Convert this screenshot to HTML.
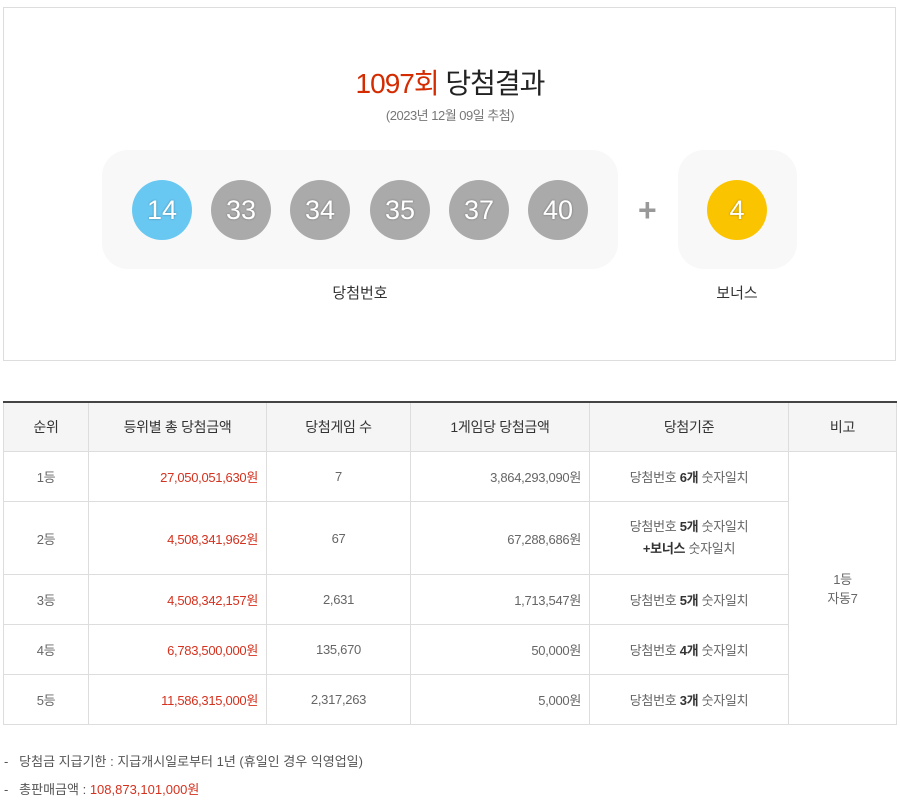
<!DOCTYPE html>
<html><head><meta charset="utf-8"><style>
body{margin:0;width:900px;height:800px;background:#fff;font-family:"Liberation Sans","Noto Sans CJK KR",sans-serif;color:#333;position:relative;overflow:hidden}
.box{position:absolute;left:3px;top:7px;width:891px;height:352px;border:1px solid #ddd}
.title{position:absolute;top:62px;left:0;width:100%;text-align:center;font-size:28px;color:#222;letter-spacing:-1px}
.title b{color:#d42b00;font-weight:normal}
.date{position:absolute;top:105px;width:100%;text-align:center;font-size:13px;color:#777;letter-spacing:-0.5px}
.panel{position:absolute;background:#f8f8f8;border-radius:26px}
.ball{position:absolute;width:60px;height:60px;border-radius:50%;background:#aaa;color:#fff;font-size:27px;line-height:60px;text-align:center;top:180px;text-shadow:0 0 2px rgba(0,0,0,.35)}
.lbl{position:absolute;top:282px;font-size:15px;color:#333;text-align:center}
table{position:absolute;left:3px;top:401px;width:894px;border-collapse:collapse;border-top:2px solid #444;font-size:13px;color:#666}
td,th{border:1px solid #ddd;padding:0 8px;letter-spacing:-0.3px}
th{background:#f5f5f5;font-weight:normal;color:#333;height:48px;font-size:14px}
td{height:49px;text-align:center}
td.r{text-align:right}
.red{color:#d4321f}
td b{color:#333}
.note{position:absolute;left:4px;font-size:13px;color:#555}
</style></head><body>
<div class="box"></div>
<div class="title"><b>1097회</b> 당첨결과</div>
<div class="date">(2023년 12월 09일 추첨)</div>
<div class="panel" style="left:102px;top:150px;width:516px;height:119px"></div>
<div class="panel" style="left:678px;top:150px;width:119px;height:119px"></div>
<div class="ball" style="left:132px;background:#69c8f2">14</div>
<div class="ball" style="left:211px">33</div>
<div class="ball" style="left:290px">34</div>
<div class="ball" style="left:370px">35</div>
<div class="ball" style="left:449px">37</div>
<div class="ball" style="left:528px">40</div>
<div style="position:absolute;left:638px;top:190px;font-size:32px;color:#999;line-height:40px;font-weight:bold">+</div>
<div class="ball" style="left:707px;background:#fbc400">4</div>
<div class="lbl" style="left:310px;width:100px">당첨번호</div>
<div class="lbl" style="left:687px;width:100px">보너스</div>
<table>
<tr><th style="width:68px">순위</th><th style="width:161px">등위별 총 당첨금액</th><th style="width:127px">당첨게임 수</th><th style="width:162px">1게임당 당첨금액</th><th style="width:182px">당첨기준</th><th>비고</th></tr>
<tr><td>1등</td><td class="r red">27,050,051,630원</td><td>7</td><td class="r">3,864,293,090원</td><td>당첨번호 <b>6개</b> 숫자일치</td><td rowspan="5">1등<br>자동7</td></tr>
<tr><td style="height:72px">2등</td><td class="r red">4,508,341,962원</td><td>67</td><td class="r">67,288,686원</td><td style="line-height:22px">당첨번호 <b>5개</b> 숫자일치<br><b>+보너스</b> 숫자일치</td></tr>
<tr><td>3등</td><td class="r red">4,508,342,157원</td><td>2,631</td><td class="r">1,713,547원</td><td>당첨번호 <b>5개</b> 숫자일치</td></tr>
<tr><td>4등</td><td class="r red">6,783,500,000원</td><td>135,670</td><td class="r">50,000원</td><td>당첨번호 <b>4개</b> 숫자일치</td></tr>
<tr><td>5등</td><td class="r red">11,586,315,000원</td><td>2,317,263</td><td class="r">5,000원</td><td>당첨번호 <b>3개</b> 숫자일치</td></tr>
</table>
<div class="note" style="top:751px">-&nbsp;&nbsp; 당첨금 지급기한 : 지급개시일로부터 1년 (휴일인 경우 익영업일)</div>
<div class="note" style="top:779px">-&nbsp;&nbsp; 총판매금액 : <span class="red">108,873,101,000원</span></div>
</body></html>
